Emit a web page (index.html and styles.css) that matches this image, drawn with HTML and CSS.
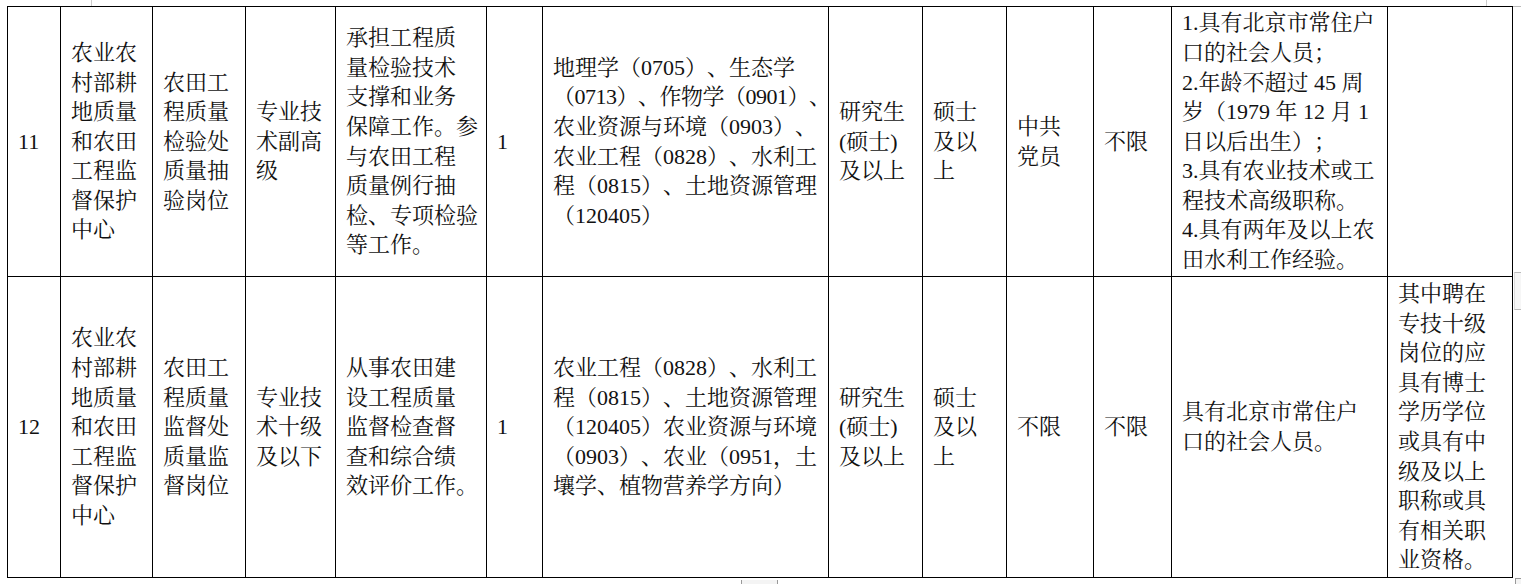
FILE: index.html
```html
<!DOCTYPE html>
<html lang="zh-CN">
<head>
<meta charset="utf-8">
<title>岗位表</title>
<link rel="stylesheet" href="styles.css">
</head>
<body>
<table class="posts">
  <colgroup>
    <col class="c-no"><col class="c-unit"><col class="c-dept"><col class="c-level"><col class="c-duty"><col class="c-num"><col class="c-major"><col class="c-edu"><col class="c-deg"><col class="c-pol"><col class="c-other"><col class="c-req"><col class="c-note">
  </colgroup>
  <tr class="r1">
    <td>11</td>
    <td>农业农<br>村部耕<br>地质量<br>和农田<br>工程监<br>督保护<br>中心</td>
    <td>农田工<br>程质量<br>检验处<br>质量抽<br>验岗位</td>
    <td>专业技<br>术副高<br>级</td>
    <td>承担工程质<br>量检验技术<br>支撑和业务<br>保障工作。参<br>与农田工程<br>质量例行抽<br>检、专项检验<br>等工作。</td>
    <td>1</td>
    <td>地理学（0705）、生态学<br><span class="tight">（0713）、作物学（0901）、</span><br>农业资源与环境（0903）、<br>农业工程（0828）、水利工<br>程（0815）、土地资源管理<br>（120405）</td>
    <td>研究生<br>(硕士)<br>及以上</td>
    <td>硕士<br>及以<br>上</td>
    <td>中共<br>党员</td>
    <td>不限</td>
    <td>1.具有北京市常住户<br>口的社会人员；<br>2.年龄不超过 45 周<br>岁（1979 年 12 月 1<br>日以后出生）；<br>3.具有农业技术或工<br>程技术高级职称。<br>4.具有两年及以上农<br>田水利工作经验。</td>
    <td></td>
  </tr>
  <tr class="r2">
    <td>12</td>
    <td>农业农<br>村部耕<br>地质量<br>和农田<br>工程监<br>督保护<br>中心</td>
    <td>农田工<br>程质量<br>监督处<br>质量监<br>督岗位</td>
    <td>专业技<br>术十级<br>及以下</td>
    <td>从事农田建<br>设工程质量<br>监督检查督<br>查和综合绩<br>效评价工作。</td>
    <td>1</td>
    <td>农业工程（0828）、水利工<br>程（0815）、土地资源管理<br>（120405）农业资源与环境<br>（0903）、农业（0951，土<br>壤学、植物营养学方向）</td>
    <td>研究生<br>(硕士)<br>及以上</td>
    <td>硕士<br>及以<br>上</td>
    <td>不限</td>
    <td>不限</td>
    <td>具有北京市常住户<br>口的社会人员。</td>
    <td>其中聘在<br>专技十级<br>岗位的应<br>具有博士<br>学历学位<br>或具有中<br>级及以上<br>职称或具<br>有相关职<br>业资格。</td>
  </tr>
</table>
<div class="mark m-top1"></div>
<div class="mark m-top2"></div>
<div class="mark m-top3"></div>
<div class="mark m-side"></div>
<div class="mark m-bottom"></div>
<div class="mark m-corner"></div>
</body>
</html>
```
FILE: styles.css
```css
html, body {
  margin: 0;
  padding: 0;
  background: #fff;
}
body {
  position: relative;
  width: 1521px;
  height: 584px;
  overflow: hidden;
  padding: 6px 0 0 7px;
  box-sizing: border-box;
  font-family: "Liberation Serif", "Noto Serif CJK SC", "Noto Sans CJK SC", serif;
  font-size: 22px;
  color: #111;
  text-spacing-trim: space-all;
}
.posts {
  border-collapse: collapse;
  table-layout: fixed;
  width: 1506px;
}
.posts td {
  border: 1px solid #000;
  padding: 0 0 0 10px;
  vertical-align: middle;
  line-height: 29.6px;
  white-space: nowrap;
  overflow: visible;
  text-spacing-trim: space-all;
}
.r1 { height: 270px; }
.r2 { height: 301px; }
.c-no { width: 53px; }
.c-unit { width: 92px; }
.c-dept { width: 93px; }
.c-level { width: 90px; }
.c-duty { width: 151px; }
.c-num { width: 56px; }
.c-major { width: 286px; }
.c-edu { width: 94px; }
.c-deg { width: 84px; }
.c-pol { width: 87px; }
.c-other { width: 78px; }
.c-req { width: 216px; }
.c-note { width: 125px; }
.tight { letter-spacing: -0.5px; }

.mark {
  position: absolute;
  box-sizing: border-box;
}
.m-top1 { left: 91px; top: 0; width: 1px; height: 6px; background: #ccc; }
.m-top2 { left: 1486px; top: 0; width: 1px; height: 6px; background: #ccc; }
.m-top3 { left: 1513px; top: 6px; width: 8px; height: 1px; background: #bbb; }
.m-side { left: 1514px; top: 272px; width: 8px; height: 38px; border-top: 1px solid #bbb; border-bottom: 1px solid #bbb; border-left: 1px solid #ddd; background: #f6f6f6; }
.m-bottom { left: 741px; top: 580px; width: 37px; height: 6px; border-left: 1px solid #999; border-right: 1px solid #999; background: #f4f4f4; }
.m-corner { left: 1515px; top: 578px; width: 7px; height: 8px; border-left: 1px solid #999; border-top: 1px solid #999; background: #f4f4f4; }
```
